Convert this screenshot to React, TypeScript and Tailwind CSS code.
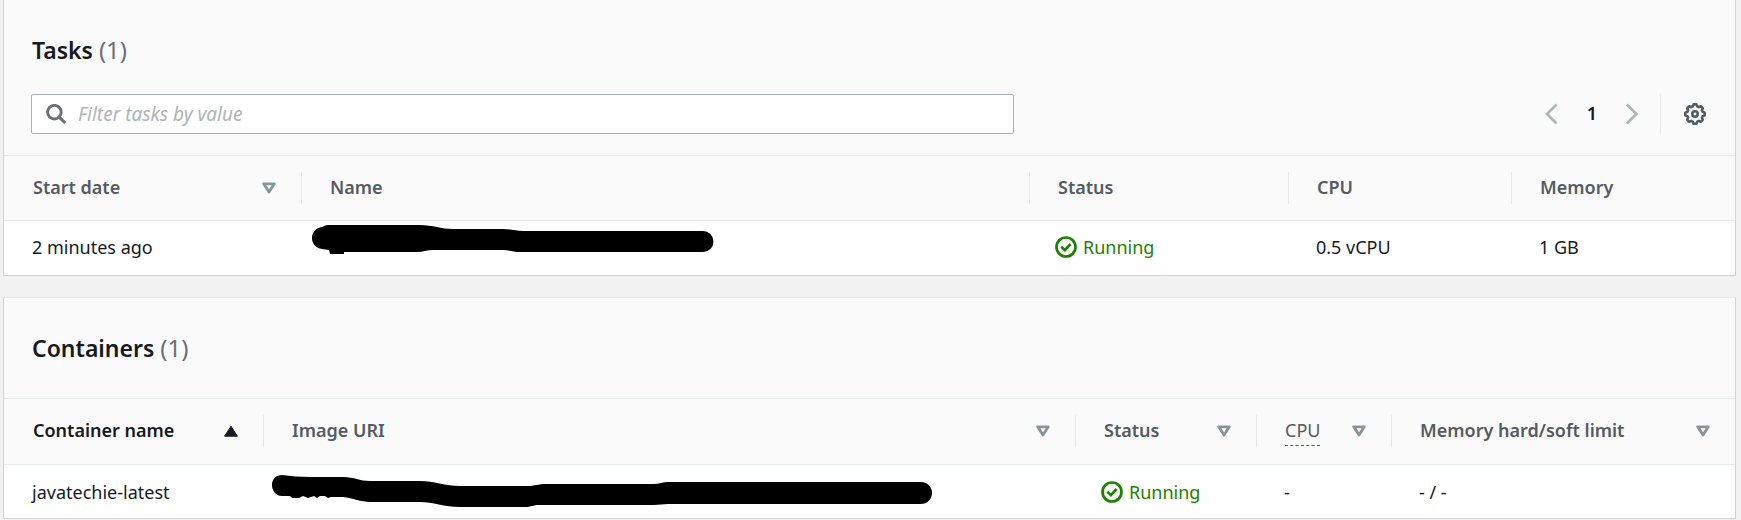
import React, { useState } from "react";

type SortState = "none" | "idle" | "ascending";

function SearchIcon() {
  return (
    <svg className="size-5 shrink-0 text-[#687078]" viewBox="0 0 20 20" fill="none" stroke="currentColor" strokeWidth="2.9" aria-hidden="true">
      <circle cx="8.4" cy="8.2" r="6.8" />
      <path d="M13.2 13.1 L19.2 19" />
    </svg>
  );
}

function Chevron({ direction }: { direction: "left" | "right" }) {
  return (
    <svg className="h-[22px] w-4 text-[#aeb5b6]" viewBox="0 0 16 22" fill="none" stroke="currentColor" strokeWidth="2.6" aria-hidden="true">
      <path d={direction === "left" ? "M12.6 1.5 L3 11 L12.6 20.5" : "M2.8 1.5 L12.4 11 L2.8 20.5"} />
    </svg>
  );
}

function GearIcon() {
  return (
    <svg className="size-6 text-[#545b64]" viewBox="0 0 24 24" fill="none" stroke="currentColor" strokeWidth="2.6" strokeLinejoin="round" aria-hidden="true">
      <path d="M10.6 2.3 H13.4 L14.2 4.4 L15.8 5.1 L17.8 4.2 L19.8 6.2 L18.9 8.2 L19.6 9.8 L21.7 10.6 V13.4 L19.6 14.2 L18.9 15.8 L19.8 17.8 L17.8 19.8 L15.8 18.9 L14.2 19.6 L13.4 21.7 H10.6 L9.8 19.6 L8.2 18.9 L6.2 19.8 L4.2 17.8 L5.1 15.8 L4.4 14.2 L2.3 13.4 V10.6 L4.4 9.8 L5.1 8.2 L4.2 6.2 L6.2 4.2 L8.2 5.1 L9.8 4.4 Z" />
      <circle cx="12" cy="12" r="2.7" />
    </svg>
  );
}

function SortIcon({ state }: { state: SortState }) {
  if (state === "ascending") {
    return (
      <svg className="h-3 w-3.5" viewBox="0 0 14 12" fill="currentColor" stroke="currentColor" strokeWidth="1" strokeLinejoin="round" aria-hidden="true">
        <path d="M7 1.2 L13.4 11.2 H0.6 Z" />
      </svg>
    );
  }
  return (
    <svg className="h-3 w-3.5 text-[#879596]" viewBox="0 0 14 12" fill="none" stroke="currentColor" strokeWidth="2.8" strokeLinejoin="round" aria-hidden="true">
      <path d="M1.7 1.8 H12.3 L7 10.1 Z" />
    </svg>
  );
}

function Running() {
  return (
    <span className="flex items-center gap-1.5 text-[#1d8102]">
      <svg className="-ml-0.5 size-[22px] shrink-0" viewBox="0 0 22 22" fill="none" stroke="currentColor" strokeWidth="2.7" aria-hidden="true">
        <circle cx="11" cy="11" r="9.5" />
        <path d="M6.3 10.8 L9.9 14.2 L15.6 8" />
      </svg>
      Running
    </span>
  );
}

function Column({
  children,
  first = false,
  sort = "none",
  width = "",
}: {
  children: React.ReactNode;
  first?: boolean;
  sort?: SortState;
  width?: string;
}) {
  return (
    <th
      scope="col"
      aria-sort={sort === "ascending" ? "ascending" : undefined}
      className={`border-b border-[#e7eaea] py-4 text-left font-semibold ${sort === "ascending" ? "text-[#16191f]" : "text-[#545b64]"} ${width}`}
    >
      <div className={`flex h-8 items-center justify-between border-l pr-[25px] pl-7 ${first ? "border-transparent" : "border-[#e7eaea]"}`}>
        <span className="pb-0.5 whitespace-nowrap">{children}</span>
        {sort !== "none" && (
          <button type="button" aria-label="Sort column">
            <SortIcon state={sort} />
          </button>
        )}
      </div>
    </th>
  );
}

function Title({ children, count }: { children: string; count: number }) {
  return (
    <h2 className="text-[23px] leading-8 font-semibold text-[#16191f]">
      {children} <span className="text-2xl leading-8 font-normal text-[#687078]">({count})</span>
    </h2>
  );
}

export default function App() {
  const [filter, setFilter] = useState("");
  return (
    <main className="flex min-h-screen flex-col gap-[21px] bg-[#f2f2f2] pr-[5px] pl-[3px] font-['Noto_Sans','Open_Sans',sans-serif] text-lg text-[#16191f]">
      <section className="border-x border-b border-[#d2d4d4] bg-[#fafafa]">
        <div className="border-b border-[#e7eaea] px-7 pt-[34px] pb-[21px]">
          <Title count={1}>Tasks</Title>
          <div className="mt-7 flex items-center justify-between gap-6">
            <label className="-ml-px flex h-10 w-full max-w-[983px] items-center gap-3 rounded-xs border border-[#aab0b2] bg-white px-3.5">
              <SearchIcon />
              <input
                type="text"
                aria-label="Filter tasks"
                placeholder="Filter tasks by value"
                value={filter}
                onChange={(e) => setFilter(e.target.value)}
                className="min-w-0 flex-1 bg-transparent text-[19px] leading-7 outline-none placeholder:text-[#aeb5b6] placeholder:italic"
              />
            </label>
            <div className="flex h-10 items-center">
              <button type="button" aria-label="Previous page"><Chevron direction="left" /></button>
              <button type="button" aria-current="page" className="w-16 pb-0.5 font-semibold">1</button>
              <button type="button" aria-label="Next page"><Chevron direction="right" /></button>
              <span className="mr-[22px] ml-5 h-10 border-l border-[#e7eaea]" />
              <button type="button" aria-label="Preferences"><GearIcon /></button>
            </div>
          </div>
        </div>
        <table className="w-full table-fixed border-separate border-spacing-0">
          <thead>
            <tr>
              <Column first sort="idle" width="w-[297px]">Start date</Column>
              <Column>Name</Column>
              <Column width="w-[259px]">Status</Column>
              <Column width="w-[223px]">CPU</Column>
              <Column width="w-[224px]">Memory</Column>
            </tr>
          </thead>
          <tbody>
            <tr className="h-[54px] bg-white">
              <td className="pb-0.5 pl-7">2 minutes ago</td>
              <td className="pt-[3px] pl-2.5 align-top">
                <svg className="h-[31px] w-[403px]" viewBox="0 0 403 31" role="img" aria-label="Hidden name">
                  <path d="M1 14 C1 8 5 4 11 3 Q14 1 17 1 H109 C122 1 130 5 142 5 H192 C200 5 205 7 212 7 H392 A10.5 10.5 0 0 1 392 28 H209 C203 28 198 26 192 26 H122 C116 26 112 28 106 28 H33 V30 H19 L18 26 L11 25 C5 24 1 20 1 14 Z" />
                </svg>
              </td>
              <td className="pb-0.5 pl-7"><Running /></td>
              <td className="pb-0.5 pl-7">0.5 vCPU</td>
              <td className="pb-0.5 pl-7">1 GB</td>
            </tr>
          </tbody>
        </table>
      </section>

      <section className="border border-[#d2d4d4] border-t-[#e7eaea] bg-[#fafafa]">
        <div className="border-b border-[#e7eaea] px-7 py-[34px]">
          <Title count={1}>Containers</Title>
        </div>
        <table className="w-full table-fixed border-separate border-spacing-0">
          <thead className="[&_th]:pb-[17px]">
            <tr>
              <Column first sort="ascending" width="w-[259px]">Container name</Column>
              <Column sort="idle">Image URI</Column>
              <Column sort="idle" width="w-[181px]">Status</Column>
              <Column sort="idle" width="w-[135px]">
                <span className="border-b border-dashed border-[#545b64] pb-[3px] font-normal">CPU</span>
              </Column>
              <Column sort="idle" width="w-[344px]">Memory hard/soft limit</Column>
            </tr>
          </thead>
          <tbody>
            <tr className="h-[53px] bg-white">
              <td className="pl-7">javatechie-latest</td>
              <td className="pt-[9px] pl-2 align-top">
                <svg className="h-[34px] w-[662px]" viewBox="0 0 662 34" role="img" aria-label="Hidden image address">
                  <path d="M1 11 C1 5 5 1 11 1 Q25 3 39 3 H72 C84 3 88 7 99 7 H149 C163 7 174 12 189 12 H256 C264 12 267 10 275 10 H383 C388 10 392 8 397 8 H650 A11 11 0 0 1 650 30 H397 C392 30 388 31 383 31 H268 C262 31 260 33 254 33 H189 C173 33 162 28 149 28 H99 C90 28 82 24 72 23 H60 L57 24 L54 22 H49 L46 24 L43 22 L37 24 L32 22 L28 24 H21 L19 22 H11 C5 22 1 17 1 11 Z" />
                </svg>
              </td>
              <td className="pl-7"><Running /></td>
              <td className="pl-7">-</td>
              <td className="pl-7">- / -</td>
            </tr>
          </tbody>
        </table>
      </section>
    </main>
  );
}
